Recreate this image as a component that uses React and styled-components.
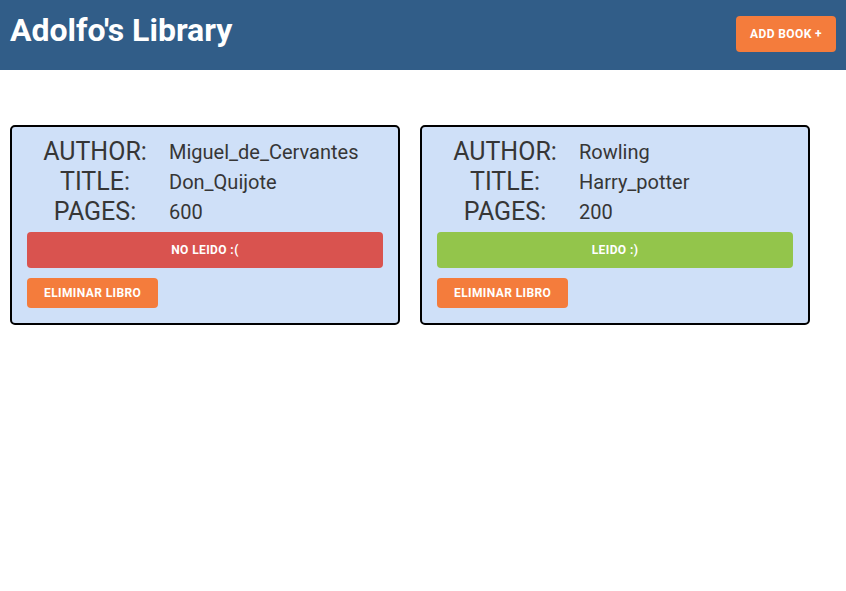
import React from "react";
import styled, { createGlobalStyle } from "styled-components";

const GlobalStyle = createGlobalStyle`
  body {
    margin: 0;
    font-family: Roboto, "Liberation Sans", sans-serif;
    background: #ffffff;
  }
`;

const Header = styled.header`
  height: 70px;
  background-color: #315d88;
  display: flex;
  align-items: flex-start;
  justify-content: space-between;
  padding: 0 10px;
`;

const Title = styled.h1`
  margin: 0;
  margin-top: 11px;
  color: #ffffff;
  font-size: 32px;
  font-weight: 700;
  line-height: 38px;
`;

const Button = styled.button`
  border: none;
  outline: none;
  cursor: pointer;
  color: #ffffff;
  font-family: Roboto, "Liberation Sans", sans-serif;
  font-weight: 700;
  font-size: 12px;
  letter-spacing: 0.4px;
  text-transform: uppercase;
  border-radius: 4px;
  background-color: ${(p) => p.$color || "#f47c3c"};
  height: ${(p) => p.$height || 30}px;
  padding: 0 17px;
`;

const AddButton = styled(Button)`
  margin-top: 16px;
  width: 100px;
  padding: 0;
`;

const Shelf = styled.main`
  display: flex;
  gap: 20px;
  padding: 55px 10px 0;
`;

const Card = styled.div`
  width: 390px;
  box-sizing: border-box;
  border: 2px solid #000000;
  border-radius: 5px;
  background-color: #cfe0f8;
  padding: 10px 15px 15px;
  display: flex;
  flex-direction: column;
  align-items: flex-start;
`;

const Info = styled.div`
  display: grid;
  grid-template-columns: 136px 1fr;
  column-gap: 6px;
  width: 100%;
  color: #363636;
`;

const Label = styled.span`
  font-size: 25px;
  line-height: 30px;
  text-align: center;
`;

const Value = styled.span`
  font-size: 20px;
  line-height: 30px;
`;

const StatusButton = styled(Button)`
  width: 100%;
  margin-top: 5px;
  margin-bottom: 10px;
`;

const books = [
  { author: "Miguel_de_Cervantes", title: "Don_Quijote", pages: 600, read: false },
  { author: "Rowling", title: "Harry_potter", pages: 200, read: true },
];

function BookCard({ book }) {
  return (
    <Card>
      <Info>
        <Label>AUTHOR:</Label>
        <Value>{book.author}</Value>
        <Label>TITLE:</Label>
        <Value>{book.title}</Value>
        <Label>PAGES:</Label>
        <Value>{book.pages}</Value>
      </Info>
      <StatusButton $height={36} $color={book.read ? "#93c54b" : "#d9534f"}>
        {book.read ? "LEIDO :)" : "NO LEIDO :("}
      </StatusButton>
      <Button>Eliminar libro</Button>
    </Card>
  );
}

export default function App() {
  return (
    <>
      <GlobalStyle />
      <Header>
        <Title>Adolfo's Library</Title>
        <AddButton $height={36}>ADD BOOK +</AddButton>
      </Header>
      <Shelf>
        {books.map((b) => (
          <BookCard key={b.title} book={b} />
        ))}
      </Shelf>
    </>
  );
}
